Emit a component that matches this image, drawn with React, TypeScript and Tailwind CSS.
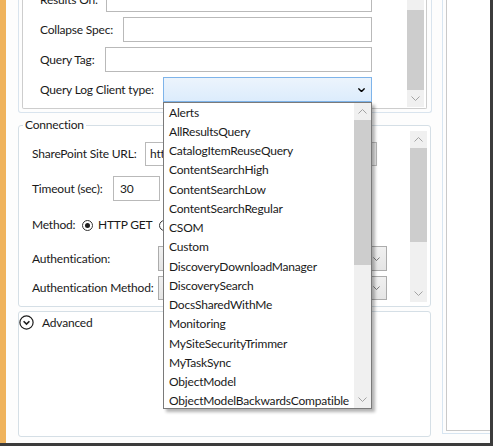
import React from 'react';

const clientTypes = [
  'Alerts',
  'AllResultsQuery',
  'CatalogItemReuseQuery',
  'ContentSearchHigh',
  'ContentSearchLow',
  'ContentSearchRegular',
  'CSOM',
  'Custom',
  'DiscoveryDownloadManager',
  'DiscoverySearch',
  'DocsSharedWithMe',
  'Monitoring',
  'MySiteSecurityTrimmer',
  'MyTaskSync',
  'ObjectModel',
  'ObjectModelBackwardsCompatible',
];

const Chevron: React.FC<{ up?: boolean; className?: string; width?: number }> = ({ up, className = '', width = 1 }) => (
  <svg viewBox="0 0 9 5" className={className} fill="none" stroke="currentColor" strokeWidth={width}>
    <path d={up ? 'M0.5 4.5L4.5 0.5L8.5 4.5' : 'M0.5 0.5L4.5 4.5L8.5 0.5'} />
  </svg>
);

const ArrowBox: React.FC<{ up?: boolean }> = ({ up }) => (
  <div className="h-[17px] shrink-0 flex items-center justify-center">
    <Chevron up={up} className="w-[9px] h-[5px] text-[#a3a3a3]" />
  </div>
);

const TextRow: React.FC<{ label: string; labelW: string; children?: React.ReactNode }> = ({ label, labelW, children }) => (
  <div className="h-[25px] shrink-0 flex items-center">
    <span className={`${labelW} shrink-0 whitespace-nowrap`}>{label}</span>
    {children ?? <div className="flex-1 h-full border border-[#b9b9b9] bg-white" />}
  </div>
);

const GrayCombo: React.FC = () => (
  <div className="w-[229px] h-full border border-[#acacac] bg-gradient-to-b from-[#f0f0f0] to-[#e5e5e5] flex items-center justify-end pr-[6px]">
    <Chevron className="w-[7px] h-[4px] text-[#555]" />
  </div>
);

export default function App() {
  return (
    <div className="w-[494px] h-[448px] bg-white relative overflow-hidden font-['Lato','Noto_Sans',sans-serif] text-[12px] tracking-[-0.2px] text-[#1a1a1a]">
      <div className="flex w-[493px] h-[446px] border-r-[3px] border-b-[3px] border-[#3c3c3c] bg-white">
        <div className="w-[6px] shrink-0 bg-[#efb35c]" />
        <div className="flex-1 flex pl-[12px] bg-[#fdfdfd]">
          <div className="w-[414px] shrink-0 flex flex-col">
            {/* search options (scrolled) */}
            <div className="h-[113px] shrink-0 border-x border-b border-[#d9e4ee] rounded-b-[3px] pl-[3px] pr-[4px] pb-[3px]">
              <div className="h-full flex border-x border-b border-[#cdcdcd] rounded-b-[2px] bg-white overflow-hidden">
                <div className="w-[349px] pl-[17px] flex flex-col justify-end gap-[5px] pb-[6px]">
                  <TextRow label="Results On:" labelW="w-[66px]" />
                  <TextRow label="Collapse Spec:" labelW="w-[83px]" />
                  <TextRow label="Query Tag:" labelW="w-[65px]" />
                  <TextRow label="Query Log Client type:" labelW="w-[123px]">
                    <div className="flex-1 h-full border border-[#7eb4ea] bg-gradient-to-b from-[#ecf4fc] to-[#dcecfc] flex items-center justify-end pr-[6px]">
                      <Chevron className="w-[7px] h-[4px] text-black" width={1.8} />
                    </div>
                  </TextRow>
                </div>
                <div className="flex-1" />
                <div className="w-[17px] mb-[1px] mr-[2px] bg-[#f0f0f0] flex flex-col">
                  <div className="h-[10px]" />
                  <div className="h-[80px] bg-[#cdcdcd]" />
                  <div className="flex-1" />
                  <ArrowBox />
                </div>
              </div>
            </div>

            {/* connection */}
            <fieldset className="mt-[4px] w-[413px] h-[190px] shrink-0 border border-[#d5dfe6] rounded-[3px] pl-[13px] pr-[3px] bg-white">
              <legend className="-ml-[9px] px-[2px] h-[16px] leading-[16px]">Connection</legend>
              <div className="flex">
                <div className="w-[355px] flex flex-col">
                  <div className="mt-[9px] h-[24px] flex items-center">
                    <span className="w-[113px] shrink-0 whitespace-nowrap">SharePoint Site URL:</span>
                    <div className="w-[232px] h-full border border-[#b9b9b9] bg-white flex items-center pl-[4px] overflow-hidden">
                      <span className="flex-1 whitespace-nowrap">http://</span>
                      <div className="w-[5px] h-full bg-[#ececec]" />
                    </div>
                  </div>
                  <div className="mt-[10px] h-[25px] flex items-center">
                    <span className="w-[81px] shrink-0 whitespace-nowrap">Timeout (sec):</span>
                    <div className="w-[47px] h-full border border-[#b9b9b9] bg-white flex items-center pl-[6px]">30</div>
                  </div>
                  <div className="mt-[14px] h-[20px] flex items-center">
                    <span className="w-[50px] shrink-0">Method:</span>
                    <span className="w-[11px] h-[11px] rounded-full border border-[#333] bg-white flex items-center justify-center">
                      <span className="w-[5px] h-[5px] rounded-full bg-[#1e1e1e]" />
                    </span>
                    <span className="ml-[5px]">HTTP GET</span>
                    <span className="ml-[7px] w-[11px] h-[11px] rounded-full border border-[#333] bg-white" />
                  </div>
                  <div className="mt-[11px] h-[25px] flex items-center">
                    <span className="w-[126px] shrink-0 whitespace-nowrap">Authentication:</span>
                    <GrayCombo />
                  </div>
                  <div className="mt-[5px] h-[24px] flex items-center">
                    <span className="w-[126px] shrink-0 whitespace-nowrap">Authentication Method:</span>
                    <GrayCombo />
                  </div>
                </div>
                <div className="flex-1" />
                <div className="w-[17px] h-[171px] -mt-[2px] bg-[#f0f0f0] flex flex-col">
                  <ArrowBox up />
                  <div className="h-[94px] bg-[#cdcdcd]" />
                  <div className="flex-1" />
                  <ArrowBox />
                </div>
              </div>
            </fieldset>

            {/* advanced */}
            <div className="mt-[4px] w-[413px] h-[126px] shrink-0 border border-[#d5dfe6] rounded-[3px] pt-[3px] bg-white">
              <div className="flex items-center gap-[8px] h-[15px]">
                <svg viewBox="0 0 15 15" className="w-[15px] h-[15px]" fill="none" stroke="#1e1e1e">
                  <circle cx="7.5" cy="7.5" r="6.6" strokeWidth="1.2" />
                  <path d="M4.6 6.2L7.5 9.1L10.4 6.2" strokeWidth="1.6" />
                </svg>
                <span>Advanced</span>
              </div>
            </div>
          </div>

          {/* right panel */}
          <div className="ml-[10px] w-[48px] h-[434px] border-l border-b border-[#d7e5f1]">
            <div className="ml-[3px] h-[431px] border-l border-b border-[#c9c9c9] bg-white" />
          </div>
        </div>
      </div>

      {/* open dropdown list */}
      <div className="absolute left-[163px] top-[102px] w-[209px] h-[307px] border border-[#7a7a7a] bg-white flex shadow-[3px_3px_3px_rgba(0,0,0,0.3)]">
        <div className="flex-1 overflow-hidden pl-[5px]">
          {clientTypes.map((t) => (
            <div key={t} className="h-[19.25px] flex items-center whitespace-nowrap">
              {t}
            </div>
          ))}
        </div>
        <div className="w-[17px] bg-[#f0f0f0] flex flex-col">
          <ArrowBox up />
          <div className="h-[145px] bg-[#cdcdcd]" />
          <div className="flex-1" />
          <ArrowBox />
        </div>
      </div>
    </div>
  );
}
